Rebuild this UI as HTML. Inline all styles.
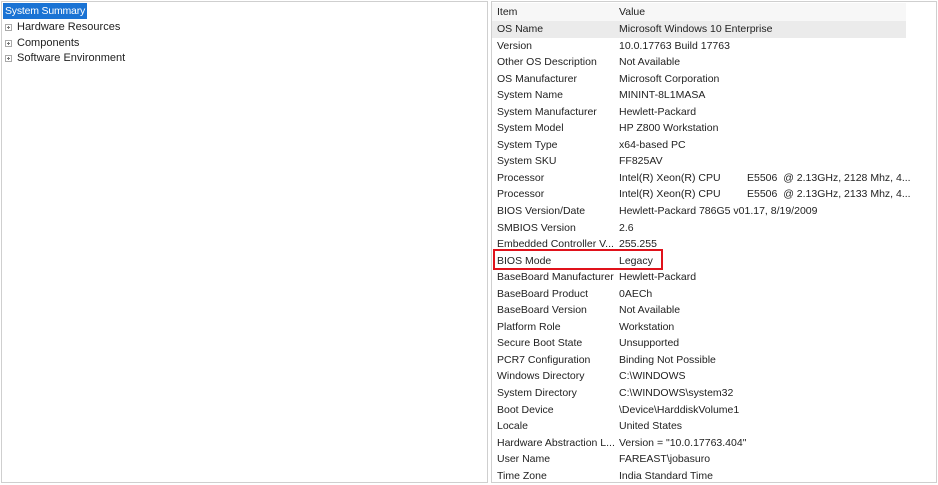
<!DOCTYPE html>
<html><head><meta charset="utf-8"><style>
*{margin:0;padding:0;box-sizing:border-box}
body{width:938px;height:485px;background:#fff;position:relative;overflow:hidden;font-family:"Liberation Sans",sans-serif;font-size:10.5px;color:#222}
.lp{position:absolute;left:1px;top:1px;width:487px;height:482px;border:1px solid #cfcfcf}
.rp{position:absolute;left:491px;top:1px;width:446px;height:482px;border:1px solid #cfcfcf}
.sel{position:absolute;left:3px;top:3px;width:84px;height:16px;background:#1a73d4;color:#fff;padding-left:2px;line-height:16px;white-space:nowrap;font-size:10.5px;letter-spacing:-0.2px}
.ti{position:absolute;left:17px;line-height:14px;white-space:nowrap;font-size:11px}
.pl{position:absolute;left:5px;width:7px;height:7px;border:1px solid #aaa}
.pl:before{content:"";position:absolute;left:1px;top:2px;width:3px;height:1px;background:#777}
.pl:after{content:"";position:absolute;left:2px;top:1px;width:1px;height:3px;background:#777}
.row{position:absolute;left:492px;width:414px;height:16.54px;line-height:16.54px;white-space:nowrap;margin-top:1.5px}
.row span{position:absolute}
.a{left:5px}.b{left:127px}.c{left:255px}
.box{position:absolute;left:493px;top:249px;width:170px;height:21px;border:2px solid #e0121b}
</style></head><body>
<div class="lp"></div><div class="rp"></div>
<div class="sel">System Summary</div>
<div class="pl" style="top:24px"></div><div class="ti" style="top:20px">Hardware Resources</div>
<div class="pl" style="top:40px"></div><div class="ti" style="top:36px">Components</div>
<div class="pl" style="top:55px"></div><div class="ti" style="top:51px">Software Environment</div>
<div class="row" style="top:3px;margin-top:0;height:18px;background:#f7f7f7"><span class="a" style="top:1px">Item</span><span class="b" style="top:1px">Value</span></div>
<div class="row" style="top:19.5px;background:#ebebeb"><span class="a">OS Name</span><span class="b">Microsoft Windows 10 Enterprise</span></div>
<div class="row" style="top:36.1px"><span class="a">Version</span><span class="b">10.0.17763 Build 17763</span></div>
<div class="row" style="top:52.6px"><span class="a">Other OS Description</span><span class="b">Not Available</span></div>
<div class="row" style="top:69.2px"><span class="a">OS Manufacturer</span><span class="b">Microsoft Corporation</span></div>
<div class="row" style="top:85.7px"><span class="a">System Name</span><span class="b">MININT-8L1MASA</span></div>
<div class="row" style="top:102.2px"><span class="a">System Manufacturer</span><span class="b">Hewlett-Packard</span></div>
<div class="row" style="top:118.8px"><span class="a">System Model</span><span class="b">HP Z800 Workstation</span></div>
<div class="row" style="top:135.3px"><span class="a">System Type</span><span class="b">x64-based PC</span></div>
<div class="row" style="top:151.9px"><span class="a">System SKU</span><span class="b">FF825AV</span></div>
<div class="row" style="top:168.4px"><span class="a">Processor</span><span class="b">Intel(R) Xeon(R) CPU</span><span class="c">E5506 &nbsp;@ 2.13GHz, 2128 Mhz, 4...</span></div>
<div class="row" style="top:184.9px"><span class="a">Processor</span><span class="b">Intel(R) Xeon(R) CPU</span><span class="c">E5506 &nbsp;@ 2.13GHz, 2133 Mhz, 4...</span></div>
<div class="row" style="top:201.5px"><span class="a">BIOS Version/Date</span><span class="b">Hewlett-Packard 786G5 v01.17, 8/19/2009</span></div>
<div class="row" style="top:218px"><span class="a">SMBIOS Version</span><span class="b">2.6</span></div>
<div class="row" style="top:234.6px"><span class="a">Embedded Controller V...</span><span class="b">255.255</span></div>
<div class="row" style="top:251.1px"><span class="a">BIOS Mode</span><span class="b">Legacy</span></div>
<div class="row" style="top:267.6px"><span class="a">BaseBoard Manufacturer</span><span class="b">Hewlett-Packard</span></div>
<div class="row" style="top:284.2px"><span class="a">BaseBoard Product</span><span class="b">0AECh</span></div>
<div class="row" style="top:300.7px"><span class="a">BaseBoard Version</span><span class="b">Not Available</span></div>
<div class="row" style="top:317.3px"><span class="a">Platform Role</span><span class="b">Workstation</span></div>
<div class="row" style="top:333.8px"><span class="a">Secure Boot State</span><span class="b">Unsupported</span></div>
<div class="row" style="top:350.3px"><span class="a">PCR7 Configuration</span><span class="b">Binding Not Possible</span></div>
<div class="row" style="top:366.9px"><span class="a">Windows Directory</span><span class="b">C:\WINDOWS</span></div>
<div class="row" style="top:383.4px"><span class="a">System Directory</span><span class="b">C:\WINDOWS\system32</span></div>
<div class="row" style="top:400px"><span class="a">Boot Device</span><span class="b">\Device\HarddiskVolume1</span></div>
<div class="row" style="top:416.5px"><span class="a">Locale</span><span class="b">United States</span></div>
<div class="row" style="top:433px"><span class="a">Hardware Abstraction L...</span><span class="b">Version = "10.0.17763.404"</span></div>
<div class="row" style="top:449.6px"><span class="a">User Name</span><span class="b">FAREAST\jobasuro</span></div>
<div class="row" style="top:466.1px"><span class="a">Time Zone</span><span class="b">India Standard Time</span></div>
<div class="box"></div>
</body></html>
